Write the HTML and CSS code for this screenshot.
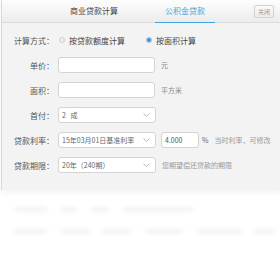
FILE: index.html
```html
<!DOCTYPE html>
<html lang="zh-CN">

<head>
    <meta charset="UTF-8">
    <meta name="viewport" content="width=device-width, initial-scale=1.0">
    <title>房贷计算器</title>
    <link rel="stylesheet" href="styles.css">
</head>

<body>
    <div class="calc-panel">
        <div class="calc-header">
            <div class="tab">商业贷款计算</div>
            <div class="tab active">公积金贷款</div>
            <button type="button" class="close-button">关闭</button>
        </div>

        <div class="calc-body">
            <div class="form-row">
                <span class="row-label">计算方式：</span>
                <span class="radio"></span>
                <span class="radio-text">按贷款额度计算</span>
                <span class="radio checked"></span>
                <span class="radio-text">按面积计算</span>
            </div>

            <div class="form-row">
                <span class="row-label">单价：</span>
                <div class="field"></div>
                <span class="unit">元</span>
            </div>

            <div class="form-row">
                <span class="row-label">面积：</span>
                <div class="field"></div>
                <span class="unit">平方米</span>
            </div>

            <div class="form-row">
                <span class="row-label">首付：</span>
                <div class="field select">
                    <span>2&nbsp;&nbsp;&nbsp;成</span>
                    <svg class="arrow" width="7" height="4" viewBox="0 0 7 4"><path d="M0.5 0.5 L3.5 3.5 L6.5 0.5" fill="none" stroke="#aaa" stroke-width="0.8"/></svg>
                </div>
            </div>

            <div class="form-row">
                <span class="row-label">贷款利率：</span>
                <div class="field select">
                    <span>15年03月01日基准利率</span>
                    <svg class="arrow" width="7" height="4" viewBox="0 0 7 4"><path d="M0.5 0.5 L3.5 3.5 L6.5 0.5" fill="none" stroke="#aaa" stroke-width="0.8"/></svg>
                </div>
                <div class="field rate">4.000</div>
                <span class="percent">%</span>
                <span class="hint">当时利率，可修改</span>
            </div>

            <div class="form-row">
                <span class="row-label">贷款期限：</span>
                <div class="field select">
                    <span>20年（240期）</span>
                    <svg class="arrow" width="7" height="4" viewBox="0 0 7 4"><path d="M0.5 0.5 L3.5 3.5 L6.5 0.5" fill="none" stroke="#aaa" stroke-width="0.8"/></svg>
                </div>
                <span class="hint">您期望偿还贷款的期限</span>
            </div>
        </div>
    </div>

    <!-- 下方模糊的结果区 -->
    <div class="result-blur">
        <div class="blur-row">
            <span class="blur-bar" style="width: 32px"></span>
            <span class="blur-bar" style="width: 16px"></span>
            <span class="blur-bar" style="width: 18px"></span>
            <span class="blur-bar" style="width: 70px"></span>
        </div>
        <div class="blur-row">
            <span class="blur-bar" style="width: 32px"></span>
            <span class="blur-bar" style="width: 28px"></span>
            <span class="blur-bar" style="width: 28px"></span>
            <span class="blur-bar" style="width: 38px"></span>
            <span class="blur-bar" style="width: 44px"></span>
            <span class="blur-bar" style="width: 20px"></span>
        </div>
    </div>
</body>

</html>
```

FILE: styles.css
```css
body {
    font-family: "Noto Sans CJK SC", "Liberation Sans", sans-serif;
    background-color: #ffffff;
    margin: 0;
    width: 280px;
    height: 270px;
    overflow: hidden;
    color: #555;
}

.calc-panel {
    margin-left: 1px;
    border-left: 1px solid #d8d8d8;
    background-color: #f3f3f3;
    box-shadow: 0 3px 6px rgba(0, 0, 0, 0.05);
}

.calc-header {
    height: 22px;
    display: flex;
    align-items: stretch;
    background: linear-gradient(#fdfdfd, #ececec);
    border-bottom: 1px solid #dcdcdc;
    position: relative;
}

.tab {
    width: 60px;
    font-size: 8px;
    line-height: 22px;
    text-align: center;
    color: #444;
}

.tab:first-child {
    margin-left: 62px;
}

.tab.active {
    margin-left: 31px;
    color: #3fa6e0;
    border-bottom: 1px solid #3fa6e0;
    height: 22px;
}

.close-button {
    position: absolute;
    right: 6px;
    top: 5px;
    height: 13px;
    width: 20px;
    padding: 0;
    font-family: inherit;
    font-size: 6px;
    line-height: 11px;
    color: #999;
    background: linear-gradient(#fafafa, #ececec);
    border: 1px solid #d2d2d2;
    border-radius: 2px;
}

.calc-body {
    padding: 9px 0 17px 12px;
    display: flex;
    flex-direction: column;
    gap: 9px;
}

.form-row {
    height: 16px;
    display: flex;
    align-items: center;
    font-size: 8px;
}

.row-label {
    width: 40px;
    text-align: right;
    margin-right: 4px;
    color: #555;
}

.radio {
    width: 4px;
    height: 4px;
    border-radius: 50%;
    border: 1px solid #ccc;
    background-color: #eee;
    margin-left: 1px;
    margin-right: 4px;
}

.radio.checked {
    margin-left: 21px;
    background-color: #3c9ddc;
    border-color: #b8c8d8;
}

.radio-text {
    color: #444;
}

.field {
    width: 95px;
    height: 14px;
    box-sizing: content-box;
    background-color: #fff;
    border: 1px solid #d4d4d4;
    border-radius: 3px;
    display: flex;
    align-items: center;
    font-size: 7px;
    color: #666;
}

.field.select {
    justify-content: space-between;
    padding-left: 3px;
    width: 93px;
}

.arrow {
    margin-right: 5px;
}

.field.rate {
    width: 33px;
    padding-left: 3px;
    margin-left: 5px;
    color: #555;
}

.unit {
    margin-left: 6px;
    font-size: 7px;
    color: #888;
}

.percent {
    margin-left: 3px;
    font-size: 7px;
    color: #666;
}

.hint {
    margin-left: 6px;
    font-size: 7px;
    color: #999;
}

.result-blur {
    padding: 17px 0 0 15px;
    display: flex;
    flex-direction: column;
    gap: 17px;
}

.blur-row {
    display: flex;
    gap: 14px;
}

.blur-bar {
    height: 5px;
    background-color: #f3f3f3;
    filter: blur(2px);
}
```
